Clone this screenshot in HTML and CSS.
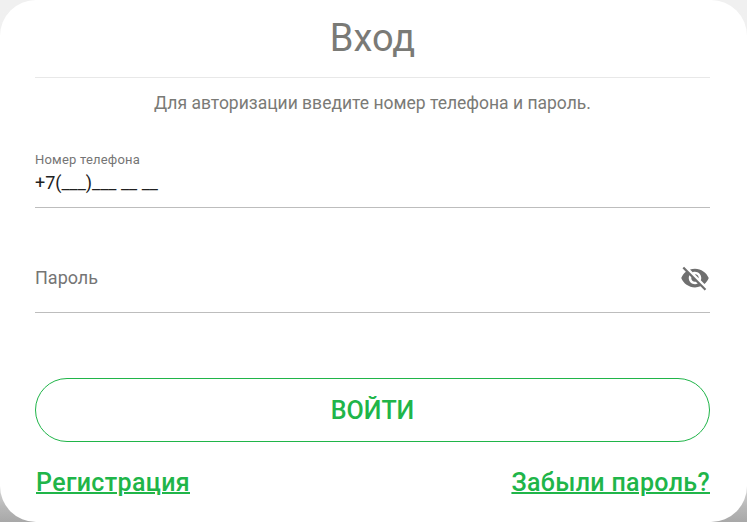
FILE: index.html
```html
<!DOCTYPE html>
<html lang="ru">
<head>
<meta charset="utf-8">
<title>Вход</title>
<link rel="stylesheet" href="styles.css">
</head>
<body>
<main class="card">
  <h1 class="title">Вход</h1>
  <p class="hint">Для авторизации введите номер телефона и пароль.</p>
  <div class="field field-phone">
    <span class="field-label">Номер телефона</span>
    <span class="field-value">+7(___)___ __ __</span>
  </div>
  <div class="field field-password">
    <span class="field-placeholder">Пароль</span>
    <svg class="eye" viewBox="0 0 24 24" width="30" height="30" aria-hidden="true">
      <path d="M12 7c2.76 0 5 2.24 5 5 0 .65-.13 1.26-.36 1.83l2.92 2.92c1.51-1.26 2.7-2.89 3.43-4.75-1.73-4.39-6-7.5-11-7.5-1.4 0-2.74.25-3.98.7l2.16 2.16C10.74 7.13 11.35 7 12 7zM2 4.27l2.28 2.28.46.46C3.08 8.3 1.78 10.02 1 12c1.73 4.39 6 7.5 11 7.5 1.55 0 3.03-.3 4.38-.84l.42.42L19.73 22 21 20.73 3.27 3 2 4.27zM7.53 9.8l1.55 1.55c-.05.21-.08.43-.08.65 0 1.66 1.34 3 3 3 .22 0 .44-.03.65-.08l1.55 1.55c-.67.33-1.41.53-2.2.53-2.76 0-5-2.24-5-5 0-.79.2-1.53.53-2.2zm4.31-.78l3.15 3.15.02-.16c0-1.66-1.34-3-3-3l-.17.01z"/>
    </svg>
  </div>
  <button class="submit" type="button">ВОЙТИ</button>
  <div class="links">
    <a class="link" href="#">Регистрация</a>
    <a class="link" href="#">Забыли пароль?</a>
  </div>
</main>
</body>
</html>
```
FILE: styles.css
```css
* { box-sizing: border-box; }
html, body { margin: 0; height: 100%; overflow: hidden; }
body {
  background: linear-gradient(180deg, #f0f0f0 0, #f2f2f2 90%, #b8b8b8 97%, #a8a8a8 100%);
  font-family: Roboto, "Noto Sans", sans-serif;
}
.card {
  height: 522px;
  padding: 0 37px 0 35px;
  background: #fff;
  border-radius: 36px;
  display: flex;
  flex-direction: column;
}
.title {
  margin: 0;
  height: 78px;
  padding-top: 15px;
  border-bottom: 1px solid #e8e8e8;
  text-align: center;
  font-size: 38px;
  line-height: 46px;
  font-weight: 400;
  color: #7a7a76;
}
.hint {
  margin: 0;
  padding-top: 15px;
  text-align: center;
  font-size: 17.5px;
  line-height: 20px;
  color: #7a7a76;
}
.field {
  position: relative;
  border-bottom: 1px solid #bdbdbd;
}
.field-phone {
  margin-top: 40px;
  height: 55px;
  display: flex;
  flex-direction: column;
}
.field-label {
  font-size: 13px;
  line-height: 14px;
  letter-spacing: 0.2px;
  color: #757575;
}
.field-value {
  margin-top: 5px;
  font-size: 18px;
  line-height: 22px;
  color: #212121;
}
.field-password {
  margin-top: 51px;
  height: 54px;
}
.field-placeholder {
  display: block;
  padding-top: 8px;
  font-size: 18px;
  line-height: 22px;
  color: #757575;
}
.eye {
  position: absolute;
  right: 0;
  top: 4px;
  fill: #6f6f6f;
}
.submit {
  margin-top: 65px;
  height: 64px;
  width: 100%;
  border: 1px solid #20b549;
  border-radius: 32px;
  background: #fff;
  color: #20b549;
  font-family: inherit;
  font-size: 25px;
  font-weight: 500;
}
.links {
  margin-top: 26px;
  padding-left: 1px;
  display: flex;
  justify-content: space-between;
}
.link {
  font-size: 25px;
  line-height: 30px;
  font-weight: 500;
  letter-spacing: 0.35px;
  color: #20b549;
  text-decoration-thickness: 2px;
}
```
